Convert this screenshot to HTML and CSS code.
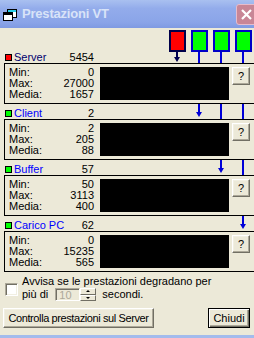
FILE: index.html
```html
<!DOCTYPE html>
<html lang="it">
<head>
    <meta charset="UTF-8">
    <title>Prestazioni VT</title>
    <link rel="stylesheet" href="styles.css">
</head>
<body>
<div class="window">
    <!-- collegamenti fra indicatori e contatori -->
    <svg class="wires" width="254" height="338">
        <g class="wire sel">
            <rect x="176" y="52" width="2" height="6"/>
            <polygon points="174,57 180,57 177,62"/>
        </g>
        <g class="wire">
            <rect x="198" y="52" width="2" height="61"/>
            <polygon points="196,112 202,112 199,117"/>
        </g>
        <g class="wire">
            <rect x="220" y="52" width="2" height="117"/>
            <polygon points="218,168 224,168 221,173"/>
        </g>
        <g class="wire">
            <rect x="242" y="52" width="2" height="173"/>
            <polygon points="240,224 246,224 243,229"/>
        </g>
    </svg>

    <div class="titlebar">
        <svg class="app-icon" width="14" height="12" viewBox="0 0 14 12">
            <rect x="4.5" y="0.5" width="9" height="8" fill="#fff" stroke="#000"/>
            <rect x="5" y="1" width="8" height="2" fill="#2ad0e8"/>
            <rect x="0.5" y="3.5" width="9" height="8" fill="#fff" stroke="#000"/>
            <rect x="1" y="4" width="8" height="2" fill="#000"/>
        </svg>
        <span class="title">Prestazioni VT</span>
        <span class="close">
            <svg width="11" height="11" viewBox="0 0 11 11">
                <path d="M1 1 L10 10 M10 1 L1 10" stroke="#fff" stroke-width="2.2"/>
            </svg>
        </span>
    </div>

    <div class="client">
        <div class="leds">
            <span class="led red sel"></span>
            <span class="led green"></span>
            <span class="led green"></span>
            <span class="led green"></span>
        </div>

        <div class="counter">
            <div class="head sel"><i class="dot red"></i><span>Server</span><span class="num">5454</span></div>
            <div class="group">
                <div class="stats">
                    <div><span>Min:</span><span>0</span></div>
                    <div><span>Max:</span><span>27000</span></div>
                    <div><span>Media:</span><span>1657</span></div>
                </div>
                <div class="graph"></div>
                <button class="btn help">?</button>
            </div>
        </div>

        <div class="counter">
            <div class="head"><i class="dot green"></i><span>Client</span><span class="num">2</span></div>
            <div class="group">
                <div class="stats">
                    <div><span>Min:</span><span>2</span></div>
                    <div><span>Max:</span><span>205</span></div>
                    <div><span>Media:</span><span>88</span></div>
                </div>
                <div class="graph"></div>
                <button class="btn help">?</button>
            </div>
        </div>

        <div class="counter">
            <div class="head"><i class="dot green"></i><span>Buffer</span><span class="num">57</span></div>
            <div class="group">
                <div class="stats">
                    <div><span>Min:</span><span>50</span></div>
                    <div><span>Max:</span><span>3113</span></div>
                    <div><span>Media:</span><span>400</span></div>
                </div>
                <div class="graph"></div>
                <button class="btn help">?</button>
            </div>
        </div>

        <div class="counter">
            <div class="head"><i class="dot green"></i><span>Carico PC</span><span class="num">62</span></div>
            <div class="group">
                <div class="stats">
                    <div><span>Min:</span><span>0</span></div>
                    <div><span>Max:</span><span>15235</span></div>
                    <div><span>Media:</span><span>565</span></div>
                </div>
                <div class="graph"></div>
                <button class="btn help">?</button>
            </div>
        </div>

        <div class="alert">
            <span class="check"></span>
            <div class="alert-text">
                <div>Avvisa se le prestazioni degradano per</div>
                <div class="row2">
                    <span>più di</span>
                    <span class="spin">
                        <span class="edit">10</span>
                        <span class="arrows">
                            <span class="arrow up"></span>
                            <span class="arrow down"></span>
                        </span>
                    </span>
                    <span>secondi.</span>
                </div>
            </div>
        </div>

        <div class="actions">
            <button class="btn wide">Controlla prestazioni sul Server</button>
            <button class="btn default">Chiudi</button>
        </div>
    </div>

    <div class="frame-bottom"></div>
</div>
</body>
</html>
```

FILE: styles.css
```css
* {
    margin: 0;
    padding: 0;
    box-sizing: border-box;
}

body {
    font-family: "Liberation Sans", Arial, sans-serif;
    font-size: 11px;
    line-height: 11px;
    color: #000;
    background: #ece9d8;
}

.window {
    position: relative;
    width: 254px;
    height: 338px;
    overflow: hidden;
    display: flex;
    flex-direction: column;
    background: #ece9d8;
}

/* linee dietro ai riquadri */
.wires {
    position: absolute;
    left: 0;
    top: 0;
    z-index: 0;
}

.wire { fill: #0000d8; }
.wire.sel { fill: #000050; }

/* barra del titolo (inattiva) */
.titlebar {
    position: relative;
    z-index: 1;
    height: 28px;
    display: flex;
    align-items: center;
    padding-left: 3px;
    background: linear-gradient(#a9c0f0, #93aceb 30%, #8aa4e8 80%, #7f9ae2);
}

.app-icon {
    margin-top: 1px;
    flex: none;
}

.title {
    margin-left: 5px;
    font-family: "Liberation Sans", Arial, sans-serif;
    font-weight: bold;
    font-size: 13px;
    line-height: 14px;
    color: #d8e3f8;
    letter-spacing: -0.2px;
}

.close {
    margin-left: auto;
    margin-right: -3px;
    width: 21px;
    height: 21px;
    display: flex;
    align-items: center;
    justify-content: center;
    background: #c88696;
    border: 1px solid #e6bccb;
    border-radius: 3px;
}

.client {
    position: relative;
    z-index: 1;
    padding-top: 2px;
}

/* indicatori in alto */
.leds {
    display: flex;
    gap: 5px;
    padding-left: 169px;
    height: 22px;
    margin-bottom: -4px;
}

.led {
    width: 17px;
    height: 22px;
    border: 2px solid #0000c8;
}

.led.sel { border-color: #00004a; }
.led.red { background: #ff0000; }
.led.green { background: #00ff00; }

/* contatori */
.head {
    height: 15px;
    width: 94px;
    padding-left: 5px;
    display: flex;
    align-items: flex-end;
    color: #0000ff;
}

.head.sel { color: #00006e; }

.head .num {
    margin-left: auto;
    color: #000;
}

.dot {
    width: 7px;
    height: 7px;
    border: 1px solid #000;
    margin: 0 2px 2px 0;
}

.dot.red { background: #ff0000; }
.dot.green { background: #00ff00; }

.group {
    position: relative;
    margin-left: 4px;
    height: 41px;
    display: flex;
    align-items: flex-start;
    padding: 3px 0 3px 4px;
    border: 1px solid #000;
    border-right: none;
    background: #ece9d8;
}

.stats {
    width: 85px;
}

.stats div {
    display: flex;
    justify-content: space-between;
}

.graph {
    width: 129px;
    height: 33px;
    margin-left: 6px;
    background: #000;
}

/* pulsanti stile classico */
.btn {
    font-family: inherit;
    font-size: 11px;
    line-height: 11px;
    padding: 0;
    white-space: nowrap;
    color: #000;
    background: #ece9d8;
    border: 1px solid;
    border-color: #fff #716f64 #716f64 #fff;
    box-shadow: inset -1px -1px 0 #aca899, inset 1px 1px 0 #f1efe2;
}

.help {
    width: 18px;
    height: 18px;
    margin-left: 3px;
}

/* avviso */
.alert {
    display: flex;
    align-items: center;
    gap: 4px;
    padding-left: 5px;
    margin-top: 4px;
}

.check {
    width: 13px;
    height: 13px;
    margin-top: 1px;
    background: #fff;
    border: 1px solid;
    border-color: #aca899 #fff #fff #aca899;
    box-shadow: inset 1px 1px 0 #716f64, inset -1px -1px 0 #f1efe2;
}

.row2 {
    height: 13px;
    margin-top: 1px;
    display: flex;
    align-items: center;
}

.spin {
    display: flex;
    margin: 0 6px 0 7px;
}

.edit {
    width: 25px;
    height: 13px;
    padding: 1px 0 0 3px;
    color: #aca899;
    background: #ece9d8;
    border: 1px solid;
    border-color: #aca899 #fff #fff #aca899;
    box-shadow: inset 1px 1px 0 #716f64;
}

.arrows {
    display: flex;
    flex-direction: column;
    width: 16px;
    height: 13px;
}

.arrow {
    position: relative;
    height: 6.5px;
    border: 1px solid;
    border-color: #fff #716f64 #716f64 #fff;
    background: #ece9d8;
}

.arrow::after {
    content: "";
    position: absolute;
    left: 5px;
    border-left: 2px solid transparent;
    border-right: 2px solid transparent;
}

.arrow.up::after {
    top: 1px;
    border-bottom: 2px solid #000;
}

.arrow.down::after {
    top: 1px;
    border-top: 2px solid #000;
}

/* pulsanti in basso */
.actions {
    display: flex;
    margin-top: 7px;
    padding: 0 4px 0 3px;
}

.wide {
    width: 151px;
    height: 20px;
    letter-spacing: -0.4px;
}

.default {
    margin-left: auto;
    width: 42px;
    height: 20px;
    border: 1px solid #000;
    box-shadow: inset 1px 1px 0 #fff, inset -1px -1px 0 #716f64, inset -2px -2px 0 #aca899;
}

.frame-bottom {
    margin-top: auto;
    height: 3px;
    background: #a3bbec;
}
```
